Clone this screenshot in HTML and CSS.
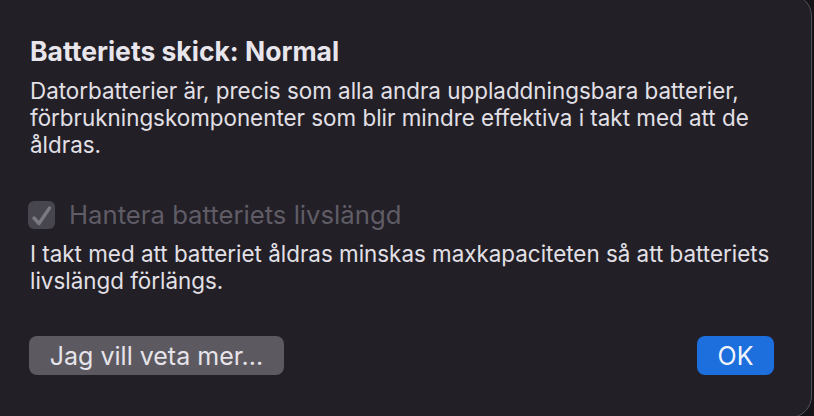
FILE: index.html
```html
<!DOCTYPE html>
<html lang="sv">
<head>
  <meta charset="UTF-8" />
  <title>Batteriets skick</title>
  <link rel="stylesheet" href="styles.css">
</head>
<body>

  <div class="dialog">
    <h2 class="title">Batteriets skick: Normal</h2>
    <p class="text">Datorbatterier är, precis som alla andra uppladdningsbara batterier, förbrukningskomponenter som blir mindre effektiva i takt med att de åldras.</p>

    <label class="option">
      <span class="checkbox">
        <svg viewBox="0 0 27 27" width="27" height="27">
          <path d="M6 17l5 5.5L21.5 7" fill="none" stroke="#7a7880" stroke-width="3.4" stroke-linecap="round" stroke-linejoin="round"/>
        </svg>
      </span>
      <span class="option-label">Hantera batteriets livslängd</span>
    </label>
    <p class="text">I takt med att batteriet åldras minskas maxkapaciteten så att batteriets livslängd förlängs.</p>

    <div class="buttons">
      <button class="btn">Jag vill veta mer...</button>
      <button class="btn primary">OK</button>
    </div>
  </div>

</body>
</html>
```

FILE: styles.css
```css
* { margin: 0; padding: 0; box-sizing: border-box; }

body {
  font-family: Inter, "Noto Sans", sans-serif;
  background: #141317;
  height: 100vh;
  overflow: hidden;
}

.dialog {
  margin: -6px 2px 0 -20px;
  height: 424px;
  background: #221f27;
  border: 1px solid #55535a;
  border-radius: 22px;
  padding: 42px 38px 0 49px;
  color: #e4e2e8;
}

.title {
  font-size: 26.5px;
  font-weight: 700;
  line-height: 28px;
  color: #e8e6ec;
  margin-bottom: 12px;
}

.text {
  font-size: 22.4px;
  line-height: 27px;
  color: #e2e0e6;
}

.option {
  display: flex;
  align-items: center;
  gap: 14px;
  margin-top: 41px;
  margin-bottom: 10px;
}

.checkbox {
  width: 27px;
  height: 28px;
  margin-left: -2px;
  border-radius: 6px;
  background: #47454d;
  display: flex;
  align-items: center;
  justify-content: center;
}

.option-label {
  font-size: 25.7px;
  color: #5f5c65;
}

.buttons {
  display: flex;
  justify-content: space-between;
  margin-top: 42px;
}

.btn {
  font-family: Inter, "Noto Sans", sans-serif;
  font-size: 25px;
  height: 39px;
  padding: 0;
  border: none;
  border-radius: 8px;
  background: #5c5961;
  color: #e6e4ea;
  width: 255px;
  margin-left: -1px;
}

.btn.primary {
  width: 77px;
  background: #1c6fdd;
  color: #f1f5fb;
  margin-right: -1px;
}
```
